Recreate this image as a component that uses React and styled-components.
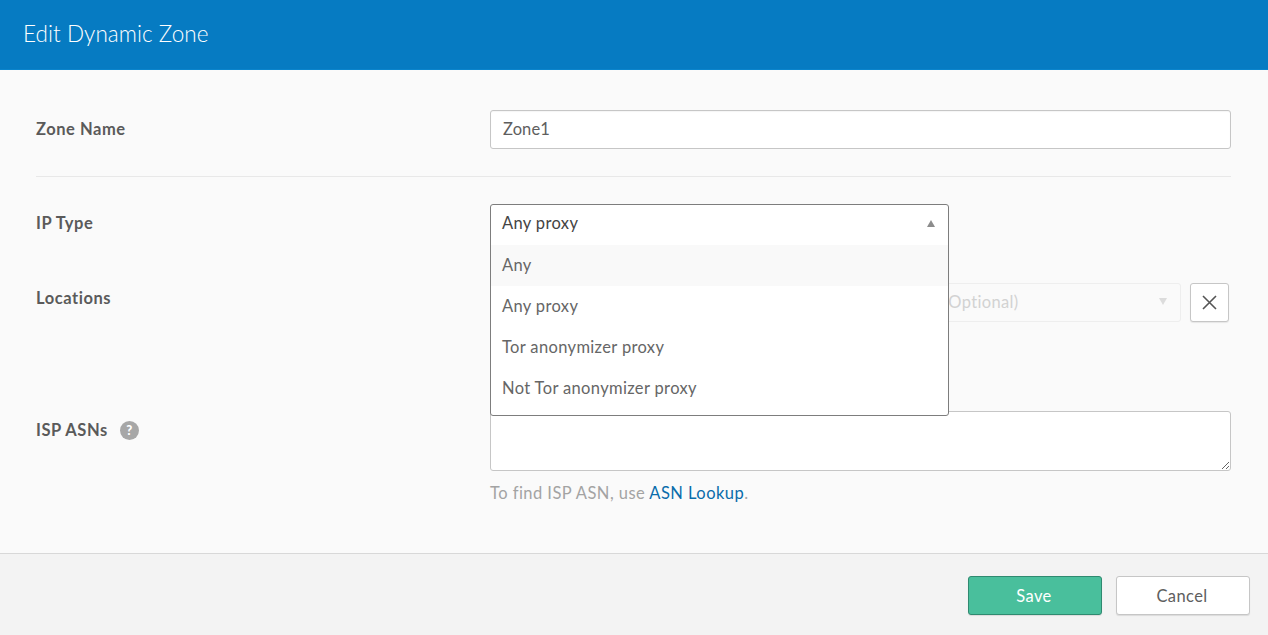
import React from "react";
import styled, { createGlobalStyle } from "styled-components";

const GlobalStyle = createGlobalStyle`
  html, body {
    margin: 0;
    height: 100%;
    overflow: hidden;
  }
  body {
    font-family: "Lato", "Open Sans", sans-serif;
    background-color: #fafafa;
    color: #5e5e5e;
  }
  * {
    box-sizing: border-box;
  }
`;

const Page = styled.div`
  display: flex;
  flex-direction: column;
  height: 635px;
`;

const Header = styled.header`
  display: flex;
  align-items: center;
  height: 70px;
  padding: 0 23px 3px;
  background-color: #067bc2;
  border-bottom: 1px solid #0a84cc;
`;

const Title = styled.h1`
  margin: 0;
  font-size: 22.5px;
  font-weight: 300;
  letter-spacing: 0.05px;
  color: #fff;
`;

const Form = styled.main`
  flex: 1;
  padding: 40px 37px 0 36px;
`;

const Row = styled.div`
  display: grid;
  grid-template-columns: 454px 1fr;
  margin-top: ${(p) => p.$top || 0}px;
  padding-bottom: ${(p) => (p.$divided ? 27 : 0)}px;
  margin-bottom: ${(p) => (p.$divided ? 27 : 0)}px;
  border-bottom: ${(p) => (p.$divided ? "1px solid #e8e8e8" : "none")};
`;

const Label = styled.label`
  display: flex;
  align-items: center;
  gap: 12px;
  height: ${(p) => p.$height || 38}px;
  font-size: 16.5px;
  font-weight: 700;
  letter-spacing: 0.55px;
  color: #5a5a5a;
`;

const HelpBadge = styled.span`
  display: inline-flex;
  align-items: center;
  justify-content: center;
  width: 19px;
  height: 19px;
  border-radius: 50%;
  background-color: #a7a7a7;
  color: #fff;
  font-size: 13px;
  font-weight: 900;
  letter-spacing: 0;
`;

const TextInput = styled.input`
  display: block;
  width: 100%;
  height: 39px;
  padding: 0 12px 2px;
  background-color: #fff;
  border: 1px solid #c6c6c6;
  border-radius: 3px;
  box-shadow: inset 0 1px 1px rgba(0, 0, 0, 0.04);
  font-family: inherit;
  font-size: 16.5px;
  letter-spacing: 0.1px;
  color: #5e5e5e;
  outline: none;
`;

const TextArea = styled.textarea`
  display: block;
  width: 100%;
  height: 60px;
  padding: 8px 12px;
  background-color: #fff;
  border: 1px solid #c6c6c6;
  border-radius: 3px;
  font-family: inherit;
  font-size: 16px;
  outline: none;
`;

const Hint = styled.p`
  margin: 12px 0 0;
  font-size: 16.5px;
  line-height: 20px;
  letter-spacing: 0.45px;
  color: #a3a3a3;
`;

const HintLink = styled.a`
  color: #0a6cab;
  text-decoration: none;
`;

const SelectWrap = styled.div`
  position: relative;
  width: 459px;
  height: 39px;
`;

const OpenPanel = styled.div`
  position: absolute;
  top: 0;
  left: 0;
  right: 0;
  z-index: 5;
  height: 212px;
  background-color: #fff;
  border: 1px solid #7d7d7d;
  border-radius: 3px;
`;

const SelectHead = styled.div`
  display: flex;
  align-items: center;
  justify-content: space-between;
  height: 40px;
  padding: 0 13px 4px 11px;
  font-size: 16.5px;
  letter-spacing: 0.35px;
  color: #444;
`;

const Caret = styled.span`
  display: block;
  width: 0;
  height: 0;
  border-left: 4.5px solid transparent;
  border-right: 4.5px solid transparent;
  border-${(p) => (p.$up ? "bottom" : "top")}: 7px solid ${(p) => p.$color};
`;

const Option = styled.div`
  display: flex;
  align-items: center;
  height: 41px;
  padding: 0 11px 2px;
  font-size: 16.5px;
  letter-spacing: 0.35px;
  color: #666;
  background-color: ${(p) => (p.$active ? "#f9f9f9" : "#fff")};
`;

const LocationLine = styled.div`
  display: flex;
  align-items: center;
  padding-right: 2px;
`;

const DisabledSelect = styled.div`
  display: flex;
  align-items: center;
  justify-content: space-between;
  flex: ${(p) => (p.$grow ? 1 : "none")};
  width: ${(p) => (p.$grow ? "auto" : "293px")};
  height: 39px;
  margin-right: ${(p) => (p.$grow ? 9 : 11)}px;
  padding: 0 13px 2px 12px;
  background-color: #fafafa;
  border: 1px solid #eeeeee;
  border-radius: 3px;
  font-size: 16.5px;
  letter-spacing: 0.35px;
  color: #d2d2d2;
`;

const RemoveButton = styled.button`
  display: flex;
  align-items: center;
  justify-content: center;
  width: 39px;
  height: 39px;
  padding: 0;
  background-color: #fff;
  border: 1px solid #c6c6c6;
  border-radius: 3px;
  box-shadow: 0 1px 1px rgba(0, 0, 0, 0.08);
`;

const Footer = styled.footer`
  display: flex;
  justify-content: flex-end;
  gap: 14px;
  height: 82px;
  padding: 22px 18px 0 0;
  background-color: #f3f3f3;
  border-top: 1px solid #d8d8d8;
`;

const Button = styled.button`
  width: 134px;
  height: 39px;
  padding: 0 2px 0 0;
  font-family: inherit;
  font-size: 16.5px;
  letter-spacing: 0.4px;
  border-radius: 3px;
  color: ${(p) => (p.$primary ? "#fff" : "#5e5e5e")};
  background-color: ${(p) => (p.$primary ? "#49bf9c" : "#fff")};
  border: 1px solid ${(p) => (p.$primary ? "#2f8a70" : "#c6c6c6")};
  box-shadow: 0 1px 1px rgba(0, 0, 0, 0.1);
`;

const ipTypes = ["Any", "Any proxy", "Tor anonymizer proxy", "Not Tor anonymizer proxy"];

export default function App() {
  return (
    <Page>
      <GlobalStyle />
      <Header>
        <Title>Edit Dynamic Zone</Title>
      </Header>

      <Form>
        <Row $divided>
          <Label>Zone Name</Label>
          <TextInput defaultValue="Zone1" />
        </Row>

        <Row>
          <Label>IP Type</Label>
          <SelectWrap>
            <OpenPanel>
              <SelectHead>
                Any proxy
                <Caret $up $color="#8c8c8c" />
              </SelectHead>
              {ipTypes.map((type) => (
                <Option key={type} $active={type === "Any"}>
                  {type}
                </Option>
              ))}
            </OpenPanel>
          </SelectWrap>
        </Row>

        <Row $top={40}>
          <Label $height={30}>Locations</Label>
          <LocationLine>
            <DisabledSelect />
            <DisabledSelect $grow>
              Any State/Region (Optional)
              <Caret $color="#dcdcdc" />
            </DisabledSelect>
            <RemoveButton aria-label="Remove location">
              <svg width="15" height="15" viewBox="0 0 15 15">
                <path d="M1 1 L14 14 M14 1 L1 14" stroke="#555" strokeWidth="1.6" fill="none" />
              </svg>
            </RemoveButton>
          </LocationLine>
        </Row>

        <Row $top={89}>
          <Label>
            ISP ASNs
            <HelpBadge>?</HelpBadge>
          </Label>
          <div>
            <TextArea />
            <Hint>
              To find ISP ASN, use <HintLink href="#">ASN Lookup</HintLink>.
            </Hint>
          </div>
        </Row>
      </Form>

      <Footer>
        <Button $primary>Save</Button>
        <Button>Cancel</Button>
      </Footer>
    </Page>
  );
}
